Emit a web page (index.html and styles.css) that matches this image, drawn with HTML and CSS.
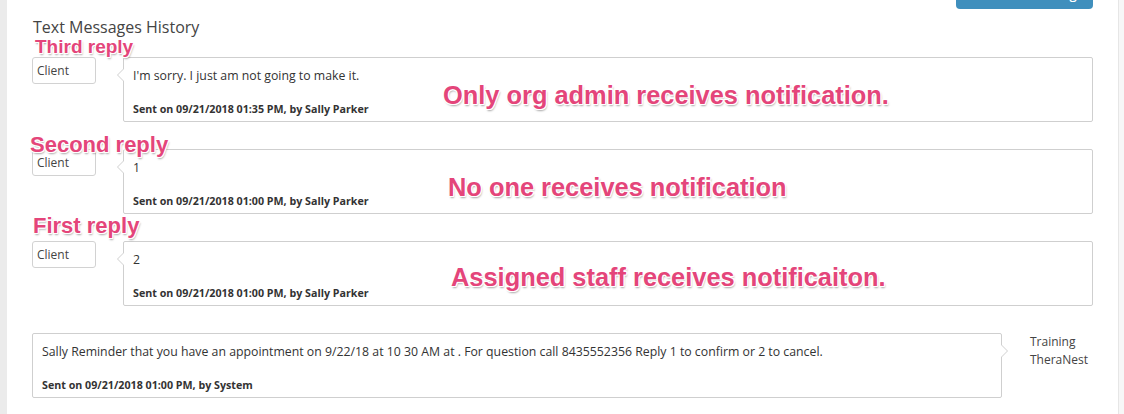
FILE: index.html
```html
<!DOCTYPE html>
<html>
<head>
<meta charset="utf-8">
<link rel="stylesheet" href="styles.css">
</head>
<body>
<div class="page">
  <main class="panel">
    <div class="toolbar"><button class="btn">Send Text Message</button></div>
    <h2 class="title">Text Messages History</h2>
    <div class="thread">
      <div class="row in">
        <span class="note note-sm tag-a">Third reply</span>
        <div class="who">Client</div>
        <div class="bubble left">
          <p class="body">I'm sorry. I just am not going to make it.</p>
          <p class="meta">Sent on 09/21/2018 01:35 PM, by Sally Parker</p>
          <span class="note note-lg big-a">Only org admin receives notification.</span>
        </div>
      </div>
      <div class="row in">
        <span class="note tag-b">Second reply</span>
        <div class="who">Client</div>
        <div class="bubble left">
          <p class="body">1</p>
          <p class="meta">Sent on 09/21/2018 01:00 PM, by Sally Parker</p>
          <span class="note note-lg big-b">No one receives notification</span>
        </div>
      </div>
      <div class="row in">
        <span class="note tag-c">First reply</span>
        <div class="who">Client</div>
        <div class="bubble left">
          <p class="body">2</p>
          <p class="meta">Sent on 09/21/2018 01:00 PM, by Sally Parker</p>
          <span class="note note-lg big-c">Assigned staff receives notificaiton.</span>
        </div>
      </div>
      <div class="row out">
        <div class="bubble right">
          <p class="body">Sally Reminder that you have an appointment on 9/22/18 at 10 30 AM at . For question call 8435552356 Reply 1 to confirm or 2 to cancel.</p>
          <p class="meta">Sent on 09/21/2018 01:00 PM, by System</p>
        </div>
        <div class="sender">Training<br>TheraNest</div>
      </div>
    </div>
  </main>
  <aside class="side"></aside>
</div>
</body>
</html>
```
FILE: styles.css
```css
html, body {
  margin: 0;
  padding: 0;
}
body {
  background: #ebebeb;
  font-family: "Open Sans", "Liberation Sans", sans-serif;
  color: #333;
}
.page {
  display: flex;
  height: 414px;
  overflow: hidden;
  padding-left: 7px;
}
.panel {
  width: 1111px;
  background: #fff;
  padding: 0 25px 0 25px;
  box-sizing: border-box;
}
.side {
  flex: 1;
  background: #f7f7f7;
  border-left: 1px solid #e6e6e6;
}
.toolbar {
  display: flex;
  justify-content: flex-end;
  margin-top: -21px;
}
.btn {
  width: 137px;
  height: 30px;
  background: #3f8fbd;
  color: #fff;
  border: 0;
  border-radius: 4px;
  font-family: "Open Sans", sans-serif;
  font-size: 13px;
  font-weight: 600;
}
.title {
  margin: 7px 0 0 1px;
  font-size: 16px;
  font-weight: 400;
  line-height: 22px;
  color: #444;
}
.thread {
  display: flex;
  flex-direction: column;
  gap: 27px;
  margin-top: 19px;
}
.row {
  position: relative;
  display: grid;
  align-items: start;
}
.row.in {
  grid-template-columns: 64px 1fr;
  column-gap: 27px;
}
.row.out {
  grid-template-columns: 1fr 63px;
  column-gap: 28px;
}
.who {
  height: 27px;
  box-sizing: border-box;
  border: 1px solid #d2d2d2;
  border-radius: 3px;
  font-size: 12px;
  line-height: 25px;
  padding-left: 4px;
  color: #444;
}
.bubble {
  position: relative;
  height: 65px;
  box-sizing: border-box;
  border: 1px solid #cfcfcf;
  border-radius: 2px;
  padding: 8px 10px 0 9px;
  background: #fff;
}
.bubble::before,
.bubble::after {
  content: "";
  position: absolute;
  top: 11px;
  border-style: solid;
  border-color: transparent;
}
.bubble.left::before {
  left: -7px;
  border-width: 6px 6px 6px 0;
  border-right-color: #cfcfcf;
}
.bubble.left::after {
  left: -6px;
  border-width: 6px 6px 6px 0;
  border-right-color: #fff;
}
.bubble.right::before {
  right: -7px;
  border-width: 6px 0 6px 6px;
  border-left-color: #cfcfcf;
}
.bubble.right::after {
  right: -6px;
  border-width: 6px 0 6px 6px;
  border-left-color: #fff;
}
.body {
  margin: 0;
  font-size: 12.3px;
  line-height: 20px;
  color: #333;
}
.meta {
  margin: 16px 0 0;
  font-size: 10.7px;
  font-weight: 700;
  line-height: 14px;
  color: #333;
}
.sender {
  font-size: 12px;
  line-height: 18px;
  color: #444;
  padding-top: 0;
}
.note {
  position: absolute;
  font-family: "Liberation Sans", Arial, sans-serif;
  font-weight: 700;
  font-size: 22px;
  line-height: 1;
  color: #e4457a;
  white-space: nowrap;
  text-shadow: 1px 0 0 #fff, -1px 0 0 #fff, 0 1px 0 #fff, 0 -1px 0 #fff,
    1px 1px 0 #fff, -1px -1px 0 #fff, 1px -1px 0 #fff, -1px 1px 0 #fff,
    1px 2px 2px rgba(0, 0, 0, 0.35);
  z-index: 2;
}
.note-sm { font-size: 19px; }
.note-lg { font-size: 25.4px; }
.tag-a { left: 3px; top: -20px; }
.tag-b { left: -2px; top: -15px; }
.tag-c { left: 1px; top: -26px; }
.big-a { left: 319px; top: 25px; }
.big-b { left: 324px; top: 25px; }
.big-c { left: 327px; top: 23px; }
```
